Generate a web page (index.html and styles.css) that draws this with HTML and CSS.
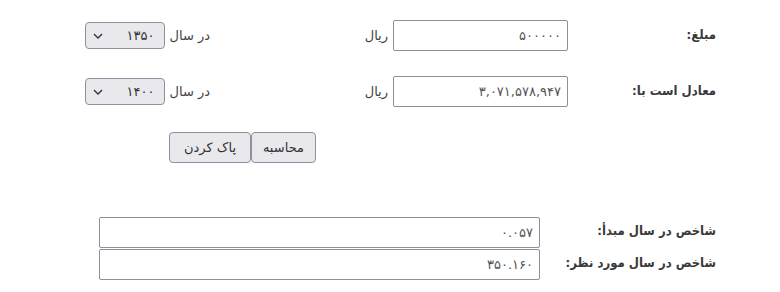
FILE: index.html
```html
<!DOCTYPE html>
<html lang="fa" dir="rtl">
<head>
  <meta charset="UTF-8" />
  <title>محاسبه ارزش پول</title>
  <link rel="stylesheet" href="styles.css">
</head>
<body>
  <div class="calc-wrapper">
    <div class="calc-row">
      <label class="calc-label" for="amount">مبلغ:</label>
      <input type="text" id="amount" class="calc-input" value="۵۰۰۰۰۰" />
      <span class="unit">ریال</span>
      <span class="year-box">
        <span class="year-label">در سال</span>
        <span class="select-wrap">
          <select class="year-select" id="fromYear">
            <option>۱۳۵۰</option>
          </select>
          <svg class="chev" width="10" height="6" viewBox="0 0 10 6"><path d="M1 1l4 4 4-4" fill="none" stroke="#3c3c44" stroke-width="1.5"/></svg>
        </span>
      </span>
    </div>

    <div class="calc-row">
      <label class="calc-label" for="result">معادل است با:</label>
      <input type="text" id="result" class="calc-input" value="۳,۰۷۱,۵۷۸,۹۴۷" />
      <span class="unit">ریال</span>
      <span class="year-box">
        <span class="year-label">در سال</span>
        <span class="select-wrap">
          <select class="year-select" id="toYear">
            <option>۱۴۰۰</option>
          </select>
          <svg class="chev" width="10" height="6" viewBox="0 0 10 6"><path d="M1 1l4 4 4-4" fill="none" stroke="#3c3c44" stroke-width="1.5"/></svg>
        </span>
      </span>
    </div>

    <div class="btn-row">
      <button class="calc-btn calc-btn-main">محاسبه</button>
      <button class="calc-btn">پاک کردن</button>
    </div>

    <div class="index-table">
      <div class="index-row">
        <span class="calc-label index-label">شاخص در سال مبدأ:</span>
        <input type="text" class="index-input" value="۰.۰۵۷" readonly />
      </div>
      <div class="index-row">
        <span class="calc-label index-label">شاخص در سال مورد نظر:</span>
        <input type="text" class="index-input" value="۳۵۰.۱۶۰" readonly />
      </div>
    </div>
  </div>
</body>
</html>
```

FILE: styles.css
```css
* {
  box-sizing: border-box;
}

body {
  margin: 0;
  background: #fff;
  font-family: "DejaVu Sans", sans-serif;
  color: #2b2b2b;
  font-size: 14px;
}

.calc-wrapper {
  width: 780px;
  padding: 20px 64px 0 0;
}

.calc-row {
  display: flex;
  align-items: center;
  height: 31px;
  margin-bottom: 25px;
}

.calc-label {
  width: 148px;
  padding-bottom: 3px;
  font-family: "DejaVu Sans Condensed", "DejaVu Sans", sans-serif;
  font-weight: bold;
  font-size: 13px;
  color: #3a3a3a;
}

.calc-input {
  width: 175px;
  height: 31px;
  padding: 0 6px;
  border: 1px solid #8f8e99;
  border-radius: 2px;
  font: inherit;
  font-size: 13px;
  color: #555;
  text-align: right;
  direction: rtl;
}

.unit {
  width: 183px;
  padding-right: 5px;
  font-size: 13px;
  color: #444;
}

.year-box {
  display: flex;
  align-items: center;
  gap: 5px;
}

.year-label {
  font-size: 13px;
  color: #444;
}

.select-wrap {
  position: relative;
  display: inline-block;
}

.year-select {
  appearance: none;
  -webkit-appearance: none;
  width: 80px;
  height: 27px;
  padding: 0 9px 0 24px;
  background: #e9e9ed;
  border: 1px solid #8f8f9d;
  border-radius: 4px;
  font: inherit;
  font-size: 13px;
  color: #333;
  direction: rtl;
}

.chev {
  position: absolute;
  left: 8px;
  top: 11px;
  pointer-events: none;
}

.btn-row {
  display: flex;
  height: 31px;
  margin-right: 400px;
}

.calc-btn {
  height: 31px;
  padding: 0 11px;
  background: #e9e9ed;
  border: 1px solid #8f8f9d;
  border-radius: 4px;
  font: inherit;
  font-size: 13px;
  color: #333;
  cursor: pointer;
}

.calc-btn-main {
  width: 65px;
}

.calc-btn:nth-child(2) {
  width: 82px;
}

.index-table {
  margin-top: 53px;
}

.index-row {
  display: flex;
  align-items: center;
  height: 32px;
}

.index-label {
  width: 176px;
}

.index-input {
  width: 441px;
  height: 31px;
  padding: 0 6px;
  border: 1px solid #8f8e99;
  border-radius: 2px;
  font: inherit;
  font-size: 13px;
  color: #555;
  text-align: right;
}
```
